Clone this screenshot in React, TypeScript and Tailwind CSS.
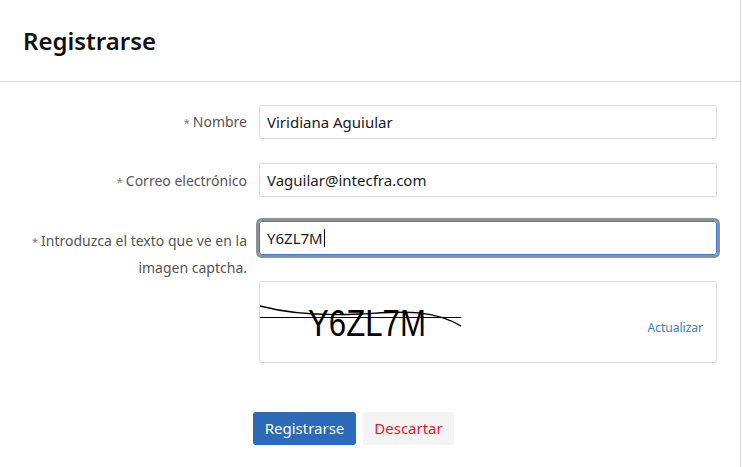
import React from "react";

const font = { fontFamily: '"Noto Sans", "Open Sans", Arial, sans-serif' };

const Label = ({ children }: { children: React.ReactNode }) => (
  <label className="block text-right text-[14px] leading-[26px] text-[#555]">
    <span className="mr-[3px] text-[11px] text-[#777]">*</span>
    {children}
  </label>
);

// captcha picture: distorted text with strike lines
const Captcha = () => (
  <svg width="202" height="48" viewBox="0 0 202 48" className="block">
    <text
      x="48"
      y="38"
      fontFamily="Liberation Sans, Arial, sans-serif"
      fontSize="36"
      textLength="118"
      lengthAdjust="spacingAndGlyphs"
      fill="#000"
    >
      Y6ZL7M
    </text>
    <line x1="0" y1="19.5" x2="201" y2="19.5" stroke="#000" strokeWidth="1.2" />
    <path
      d="M0 8 C 30 16, 60 18, 100 16 S 170 10, 201 28"
      fill="none"
      stroke="#000"
      strokeWidth="1.4"
    />
  </svg>
);

const inputCls =
  "h-[34px] w-[458px] rounded-[3px] border border-[#dcdcdc] px-[7px] text-[15px] text-[#1b1b1b] outline-none";

export default function App() {
  return (
    <div className="min-h-[467px] w-[742px] bg-white" style={font}>
      <div className="min-h-[467px] w-[741px] border-r border-[#d6d6d6]">
        <div className="flex h-[82px] items-center border-b border-[#d6d6d6] px-[23px]">
          <h2 className="text-[24px] font-semibold text-[#111]">Registrarse</h2>
        </div>

        <div className="flex flex-col gap-[24px] pt-[23px]">
          <div className="flex gap-[12px]">
            <div className="w-[247px] pt-[4px]">
              <Label>Nombre</Label>
            </div>
            <input readOnly defaultValue="Viridiana Aguiular" className={inputCls} />
          </div>

          <div className="flex gap-[12px]">
            <div className="w-[247px] pt-[5px]">
              <Label>Correo electrónico</Label>
            </div>
            <input readOnly defaultValue="Vaguilar@intecfra.com" className={inputCls} />
          </div>

          <div className="flex gap-[12px]">
            <div className="w-[247px] pt-[7px]">
              <Label>
                Introduzca el texto que ve en la
                <br />
                imagen captcha.
              </Label>
            </div>
            <div className="flex w-[458px] flex-col gap-[26px]">
              <div className="flex h-[34px] items-center rounded-[3px] border border-[#2f80e0] px-[7px] text-[15px] text-[#1b1b1b] shadow-[0_0_0_3px_#8c9196]">
                Y6ZL7M
                <span className="ml-[1px] inline-block h-[18px] w-px bg-black" />
              </div>
              <div className="flex h-[82px] items-center justify-between rounded-[3px] border border-[#dcdcdc] pr-[13px]">
                <Captcha />
                <a className="mt-[12px] text-[12px] text-[#3b7bd0]">Actualizar</a>
              </div>
            </div>
          </div>
        </div>

        <div className="mt-[49px] flex gap-[7px] pl-[253px]">
          <button className="h-[33px] w-[103px] rounded-[3px] bg-[#2d6ab7] text-[15px] text-white">
            Registrarse
          </button>
          <button className="h-[33px] w-[91px] rounded-[3px] bg-[#f4f4f4] text-[15px] text-[#f0142a]">
            Descartar
          </button>
        </div>
      </div>
    </div>
  );
}
